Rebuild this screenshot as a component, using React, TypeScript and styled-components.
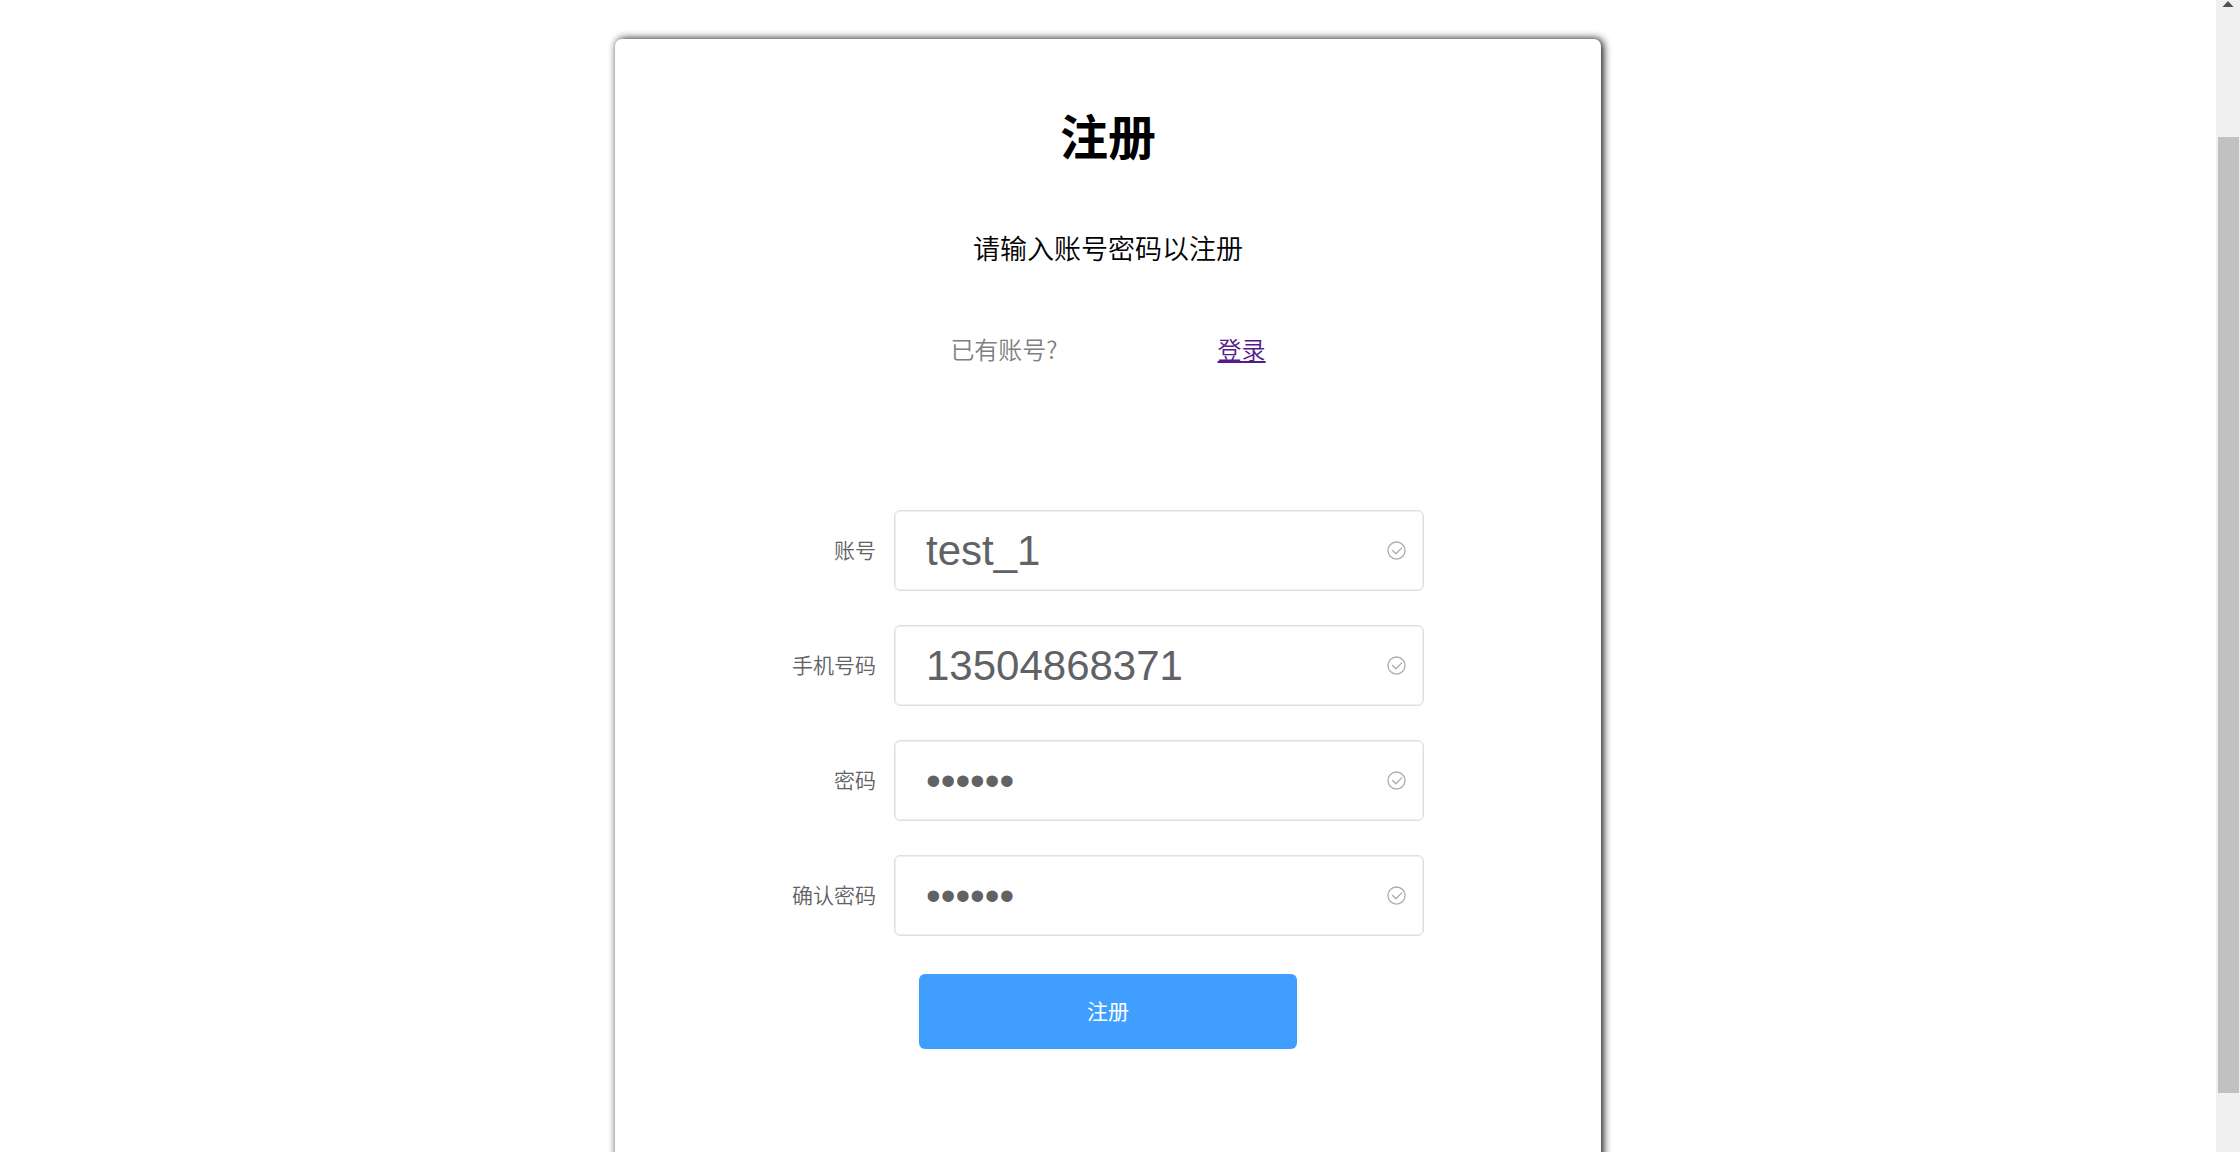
import React, { useState } from "react";
import styled, { createGlobalStyle } from "styled-components";

const GlobalStyle = createGlobalStyle`
  * { box-sizing: border-box; }
  body {
    margin: 0;
    background: #fff;
    color: #000;
    font-family: "Noto Sans CJK SC", sans-serif;
    font-weight: 350;
  }
`;

const Page = styled.div`
  display: grid;
  grid-template-columns: minmax(0, 1fr) 24px;
  height: 100vh;
  overflow: hidden;
`;

const Main = styled.main`
  display: flex;
  flex-direction: column;
  align-items: center;
  padding-top: 39px;
  overflow: hidden;
`;

const Card = styled.section`
  display: flex;
  flex-direction: column;
  align-items: center;
  flex: 1 0 auto;
  width: 44.5%;
  min-width: 720px;
  margin-bottom: -40px;
  padding: 65px 40px 140px;
  border-radius: 7px;
  background: #fff;
  box-shadow: 2px 0 9px #000;
`;

const Title = styled.h1`
  margin: 0;
  font-size: 48px;
  line-height: 60px;
  font-weight: 700;
`;

const Subtitle = styled.p`
  margin: 64px 0 0;
  font-size: 27px;
  line-height: 40px;
`;

const LoginHint = styled.div`
  display: flex;
  gap: 160px;
  margin-top: 63px;
  font-size: 24px;
  line-height: 36px;
  color: #808080;
`;

const LoginLink = styled.a`
  color: #551a8b;
  text-decoration: underline;
`;

const Form = styled.form`
  display: flex;
  flex-direction: column;
  gap: 34px;
  width: 632px;
  margin-top: 143px;
`;

const Row = styled.div`
  display: grid;
  grid-template-columns: 84px minmax(0, 1fr);
  gap: 18px;
  align-items: center;
`;

const Label = styled.label`
  padding-bottom: 4px;
  font-size: 21px;
  line-height: 32px;
  color: #606266;
  text-align: right;
  white-space: nowrap;
`;

const InputBox = styled.div`
  display: flex;
  align-items: center;
  height: 81px;
  padding: 0 16px 0 31px;
  border: 1px solid #dcdfe6;
  border-radius: 6px;
  box-shadow: inset 0 0 0 1px #edeff2;
`;

const Input = styled.input`
  flex: 1;
  min-width: 0;
  height: 48px;
  padding: 0;
  border: 0;
  outline: 0;
  background: transparent;
  color: #606266;
  font-family: "Liberation Sans", Arial, sans-serif;
  font-size: 42px;
  font-weight: 400;
`;

const CheckIcon = styled.svg`
  width: 21px;
  height: 21px;
  fill: #a8abb2;
`;

const SubmitButton = styled.button`
  align-self: center;
  width: 378px;
  height: 75px;
  margin-top: 4px;
  padding: 0 0 4px;
  border: 0;
  border-radius: 6px;
  background: #409eff;
  color: #fff;
  font-family: inherit;
  font-size: 21px;
  font-weight: 400;
  cursor: pointer;
`;

const ScrollTrack = styled.div`
  display: flex;
  flex-direction: column;
  align-items: center;
  gap: 130px;
  background: #f0f0f0;
`;

const ScrollArrow = styled.svg`
  width: 12px;
  height: 7px;
  fill: #505050;
`;

const ScrollThumb = styled.div`
  width: 21px;
  height: 83vh;
  background: #c1c1c1;
`;

const fields = [
  { id: "account", label: "账号", type: "text", value: "test_1" },
  { id: "phone", label: "手机号码", type: "text", value: "13504868371" },
  { id: "password", label: "密码", type: "password", value: "123456" },
  { id: "confirm", label: "确认密码", type: "password", value: "123456" },
];

function Field({ id, label, type, value }: (typeof fields)[number]) {
  const [text, setText] = useState(value);
  return (
    <Row>
      <Label htmlFor={id}>{label}</Label>
      <InputBox>
        <Input
          id={id}
          type={type}
          value={text}
          autoComplete="off"
          onChange={(e) => setText(e.target.value)}
        />
        <CheckIcon viewBox="0 0 1024 1024" aria-hidden="true">
          <path d="M512 896a384 384 0 1 0 0-768 384 384 0 0 0 0 768zm0 64a448 448 0 1 1 0-896 448 448 0 0 1 0 896z" />
          <path d="M745.344 361.344a32 32 0 0 1 45.312 45.312l-288 288a32 32 0 0 1-45.312 0l-160-160a32 32 0 1 1 45.312-45.312L480 626.752l265.344-265.408z" />
        </CheckIcon>
      </InputBox>
    </Row>
  );
}

export default function App() {
  return (
    <>
      <GlobalStyle />
      <Page>
        <Main>
          <Card>
            <Title>注册</Title>
            <Subtitle>请输入账号密码以注册</Subtitle>
            <LoginHint>
              <span>已有账号?</span>
              <LoginLink href="#login">登录</LoginLink>
            </LoginHint>
            <Form onSubmit={(e) => e.preventDefault()}>
              {fields.map((field) => (
                <Field key={field.id} {...field} />
              ))}
              <SubmitButton type="submit">注册</SubmitButton>
            </Form>
          </Card>
        </Main>
        <ScrollTrack aria-hidden="true">
          <ScrollArrow viewBox="0 0 12 7">
            <path d="M6 1 11.500 7H.5z" />
          </ScrollArrow>
          <ScrollThumb />
        </ScrollTrack>
      </Page>
    </>
  );
}
